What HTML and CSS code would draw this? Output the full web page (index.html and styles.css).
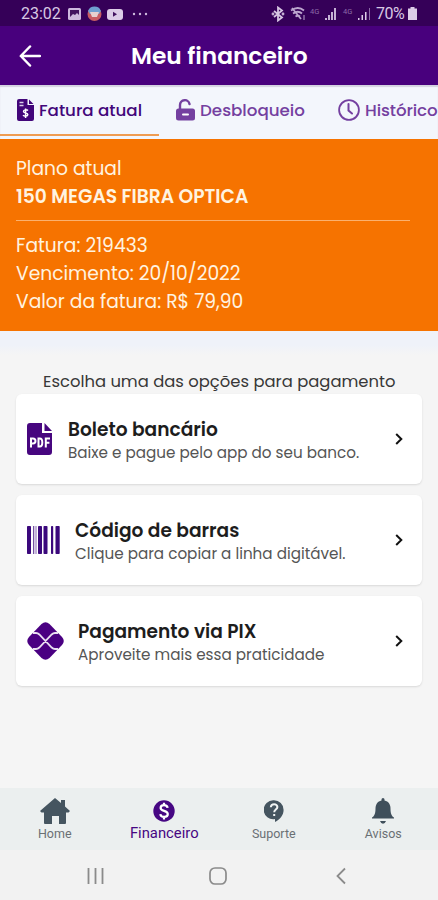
FILE: index.html
```html
<!DOCTYPE html>
<html lang="pt-BR">
<head>
<meta charset="utf-8">
<title>Meu financeiro</title>
<link rel="stylesheet" href="styles.css">
</head>
<body>
<div class="phone">
  <div class="status">
    <span class="clock">23:02</span>
    <svg class="st-left" width="86" height="16" viewBox="0 0 86 16">
      <rect x="1" y="2" width="13" height="12" rx="1.5" fill="#cdb9de"/>
      <path d="M3 4h9v5l-2-2-2 2-2-1-3 3z" fill="#41125f"/>
      <circle cx="27.500" cy="8" r="7" fill="#c85c62"/>
      <path d="M21 5a7 7 0 0 1 13 0l-2 3H23z" fill="#6f9fd0"/>
      <path d="M23 6h9l-2 5h-5z" fill="#e7d0ce"/>
      <rect x="40" y="3" width="16" height="11" rx="3" fill="#dccce8"/>
      <path d="M46 5.800v5l4-2.500z" fill="#41125f"/>
      <g fill="#cdb9de"><circle cx="67" cy="8" r="1.200"/><circle cx="73" cy="8" r="1.200"/><circle cx="79" cy="8" r="1.200"/></g>
    </svg>
    <svg class="st-right" width="102" height="16" viewBox="0 0 102 16">
      <g fill="none" stroke="#d6c5e2" stroke-width="1.800"><path d="M3 5l8 6.500-4 3v-13l4 3L3 11"/><circle cx="2" cy="8" r=".5"/><circle cx="12" cy="8" r=".5"/></g>
      <g fill="none" stroke="#bda6cf" stroke-width="1.800"><path d="M20 4.500q7-5 13 0M22 7.500q5-3.500 9 0M24.500 10.500q2.500-1.500 4.500 0M21 2l9 11"/><path d="M33 9v5" stroke-width="1"/></g>
      <text x="39" y="8" class="net">4G</text>
      <path d="M54 14v-2h2v2zM57 14v-5h2v5zM60 14V6h2v8zM63 14V2h2v12z" fill="#c5b0d5"/>
      <text x="72" y="8" class="net">4G</text>
      <path d="M87 14v-2h1.500v2zM90.500 14V9h1.500v5zM94 14V6h1.500v8z" fill="#dccce8"/><path d="M98 14V2h1v12z" fill="#8d6ba8"/>
    </svg>
    <span class="battery">70%</span>
    <svg class="bat" width="9" height="13" viewBox="0 0 9 13"><path d="M2.500 0h4v1.500H9V13H0V1.500h2.500z" fill="#dccce8"/></svg>
  </div>

  <header class="header">
    <svg class="back" width="22" height="22" viewBox="0 0 22 22"><path d="M11 1.500 1.800 11l9.200 9.500M2 11h19" fill="none" stroke="#fff" stroke-width="2.500" stroke-linecap="round" stroke-linejoin="round"/></svg>
    <h1>Meu financeiro</h1>
  </header>

  <nav class="tabs">
    <div class="tab tab-active">
      <svg width="17" height="22" viewBox="0 0 17 22"><path d="M2 0h8.500v6H17v14a2 2 0 0 1-2 2H2a2 2 0 0 1-2-2V2a2 2 0 0 1 2-2zM12 .5 16.500 5H12z" fill="#42067a"/><path d="M2.500 3.500h4M2.500 6.500h4" stroke="#d9cfe8" stroke-width="1.300"/><path d="M11 11.500c-1-1-4.500-1-4.500 1s4.300 1 4.300 3-3.500 2-4.800.8M8.600 9.500v9.500" fill="none" stroke="#fff" stroke-width="1.500"/></svg>
      <span>Fatura atual</span>
    </div>
    <div class="tab tab-unlock">
      <svg width="19" height="22" viewBox="0 0 19 22"><path d="M4 11V6a4.800 4.800 0 0 1 9.500-1" fill="none" stroke="#7440a0" stroke-width="2.400" stroke-linecap="round"/><rect y="9.500" width="19" height="12" rx="2.500" fill="#7440a0"/><path d="M7 15.500h5" stroke="#fff" stroke-width="2" stroke-linecap="round"/></svg>
      <span>Desbloqueio</span>
    </div>
    <div class="tab tab-history">
      <svg width="22" height="22" viewBox="0 0 22 22"><g fill="none" stroke="#7440a0" stroke-linecap="round"><circle cx="11" cy="11" r="9.900" stroke-width="1.800"/><path d="M10.500 5v6.500l3.500 3" stroke-width="2"/></g></svg>
      <span>Histórico</span>
    </div>
  </nav>

  <section class="plan">
    <p>Plano atual</p>
    <p class="plan-name">150 MEGAS FIBRA OPTICA</p>
    <hr>
    <p>Fatura: 219433</p>
    <p>Vencimento: 20/10/2022</p>
    <p>Valor da fatura: R$ 79,90</p>
  </section>

  <main class="content">
    <p class="choose">Escolha uma das opções para pagamento</p>
    <div class="cards">
      <a class="card">
        <svg class="ic-pdf" width="25" height="32" viewBox="0 0 25 32"><path d="M3 0h12v10h10v19a3 3 0 0 1-3 3H3a3 3 0 0 1-3-3V3a3 3 0 0 1 3-3zM17.500 0 25 8h-7.500z" fill="#47067f"/><g fill="none" stroke="#fff" stroke-width="2"><path d="M4 24.500v-9h2a2.400 2.400 0 0 1 0 5H4M11.500 15.500v8h1.300q2.500 0 2.500-4t-2.500-4zM18.800 24.500v-9h4.200M18.800 19.800h3.600"/></g></svg>
        <div class="txt"><h2>Boleto bancário</h2><p>Baixe e pague pelo app do seu banco.</p></div>
        <svg class="chev" width="8" height="12" viewBox="0 0 8 12"><path d="M1.200 1 6.300 6l-5.100 5" fill="none" stroke="#111" stroke-width="2"/></svg>
      </a>
      <a class="card">
        <svg class="ic-bar" width="33" height="28" viewBox="0 0 33 28"><g fill="#3b087c"><rect width="4" height="28" rx=".8"/><rect x="6" width="1.300" height="28" opacity=".7"/><rect x="8.500" width="1" height="28" opacity=".6"/><rect x="11" width="4" height="28" rx=".8"/><rect x="16.500" width="4" height="28" rx=".8"/><rect x="24" width="2.200" height="28" rx=".8"/><rect x="28.500" width="4.200" height="28" rx=".8"/></g></svg>
        <div class="txt"><h2>Código de barras</h2><p>Clique para copiar a linha digitável.</p></div>
        <svg class="chev" width="8" height="12" viewBox="0 0 8 12"><path d="M1.200 1 6.300 6l-5.100 5" fill="none" stroke="#111" stroke-width="2"/></svg>
      </a>
      <a class="card">
        <svg class="ic-pix" width="37" height="38" viewBox="0 0 37 38"><path d="M14.500 2q4-3.500 8 0L35 15q3.500 4 0 8L22.500 36q-4 3.500-8 0L2 23q-3.500-4 0-8z" fill="#4a0082"/><path d="M6 11h3q1.800 0 3.300 1.500L24.700 25.500Q26.200 27 28 27h3M31 11h-3q-1.800 0-3.300 1.500L12.300 25.500Q10.800 27 9 27H6" fill="none" stroke="#e9dff1" stroke-width="1.800"/></svg>
        <div class="txt"><h2>Pagamento via PIX</h2><p>Aproveite mais essa praticidade</p></div>
        <svg class="chev" width="8" height="12" viewBox="0 0 8 12"><path d="M1.200 1 6.300 6l-5.100 5" fill="none" stroke="#111" stroke-width="2"/></svg>
      </a>
    </div>
  </main>

  <nav class="bottom">
    <div class="item">
      <svg width="30" height="26" viewBox="0 0 30 26"><path d="M15 0l6 5V2h4v6.500l5 4.500-1.500 1.500H26V25a1 1 0 0 1-1 1h-6v-8h-7v8H5a1 1 0 0 1-1-1V14.500H1.500L0 13z" fill="#455560"/></svg>
      <span>Home</span>
    </div>
    <div class="item on">
      <svg width="22" height="22" viewBox="0 0 22 22"><circle cx="11" cy="11" r="10.700" fill="#460783"/><path d="M14.600 7.800c-.5-3.600-7-3.500-7 .1 0 3.600 7.200 2.400 7.200 6.200 0 3.700-7 3.800-7.500 0M11 2.700V5M11 17v2.500" fill="none" stroke="#fff" stroke-width="2.200"/></svg>
      <span>Financeiro</span>
    </div>
    <div class="item">
      <svg width="20" height="22" viewBox="0 0 20 22"><path d="M10 .3a9.600 9.600 0 0 1 9.600 9.600c0 5-3.600 9.500-8.600 12.100v-2.900A9.500 9.500 0 1 1 10 .3z" fill="#455560"/><path d="M6.800 7.200c.3-4 6.600-3.800 6.600-.2 0 2.500-3.200 2.600-3.200 5.200M10.200 14v2" fill="none" stroke="#f0f4f4" stroke-width="2"/></svg>
      <span>Suporte</span>
    </div>
    <div class="item">
      <svg width="22" height="26" viewBox="0 0 22 26"><path d="M9.500 2.500V1.500a1.500 1.500 0 0 1 3 0v1c4 .8 6 4 6 8 0 5 1 7.500 3.500 9v1H0v-1c2.500-1.500 3.500-4 3.500-9 0-4 2-7.200 6-8zM8 23h6q-1 2.800-3 2.800T8 23z" fill="#3f4f5b"/></svg>
      <span>Avisos</span>
    </div>
  </nav>

  <div class="system">
    <svg width="17" height="18" viewBox="0 0 17 18"><path d="M1.500 1v16M8.500 1v16M15.500 1v16" stroke="#8b8b8b" stroke-width="1.800"/></svg>
    <svg class="sys-home" width="18" height="18" viewBox="0 0 18 18"><rect x="1" y="1" width="16" height="16" rx="5" fill="none" stroke="#8b8b8b" stroke-width="1.700"/></svg>
    <svg width="10" height="18" viewBox="0 0 10 18"><path d="M9 1.500 1.500 9 9 16.500" fill="none" stroke="#8b8b8b" stroke-width="1.800"/></svg>
  </div>
</div>
</body>
</html>
```

FILE: styles.css
```css
* { box-sizing: border-box; margin: 0; padding: 0; }
body { width: 438px; height: 900px; overflow: hidden; font-family: Poppins, Inter, sans-serif; background: #f5f5f5; }
svg { display: block; flex: none; }
.phone { width: 438px; height: 900px; display: flex; flex-direction: column; white-space: nowrap; overflow: hidden; }

.status { height: 26px; background: #350058; display: flex; align-items: center; padding: 1px 0 0 21px; color: #d8c8e4; font-family: Roboto, sans-serif; flex: none; }
.clock { font-size: 16px; width: 46px; }
.st-right { margin-left: 118px; }
.net { font: 7.500px Roboto, sans-serif; fill: #8d6ba8; }
.battery { font-size: 16px; width: 31px; margin-left: 3px; letter-spacing: -.5px; }
.bat { margin-left: 1px; }

.header { height: 59px; background: #48007d; display: flex; align-items: center; padding-left: 19px; color: #fff; flex: none; }
.header h1 { margin-left: 90px; font-size: 23.300px; font-weight: 600; }

.tabs { height: 54px; display: flex; background: #f3f6fc; box-shadow: inset 0 2px 1px #d3d2e0; flex: none; color: #7440a0; font-weight: 500; font-size: 16.700px; }
.tab { display: flex; align-items: center; flex: none; height: 51px; padding-bottom: 1px; }
.tab span { margin-left: 5px; }
.tab-active { width: 159px; padding: 0 0 0 17px; color: #42067a; border-bottom: 2px solid #ef9c52; }
.tab-unlock { padding-left: 17px; width: 179px; }
.tab-history span { font-size: 16.700px; letter-spacing: -.1px; }

.plan { height: 192px; background: #f67300; color: #fff3e0; padding: 16px 28px 0 16px; font-size: 18.700px; line-height: 28px; flex: none; }
.plan-name { font-weight: 600; }
.plan hr { border: 0; height: 1px; background: #fbb16e; margin: 9px 0 11px; }

.content { height: 457px; background: linear-gradient(#eff2f9 0, #eff2f9 14px, #f5f5f5 24px); padding: 39px 16px 0; flex: none; }
.choose { padding-left: 27px; height: 24px; line-height: 24px; font-size: 16.400px; color: #383838; }
.cards { display: grid; gap: 11px; grid-auto-rows: 90px; }
.card { background: #fff; border-radius: 6px; box-shadow: 0 1px 2px #d8d8d8; display: flex; align-items: center; padding: 0 19px 1px 11px; }
.ic-pdf { margin-right: 16px; }
.ic-bar { margin-right: 15px; }
.ic-pix { margin-right: 14px; }
.txt { flex: 1; padding-top: 3px; }
.card h2 { font-size: 18.600px; line-height: 24px; font-weight: 600; color: #1d1d1d; }
.card p { font-size: 15.200px; line-height: 21px; color: #555; }

.bottom { height: 62px; background: #ebefef; display: grid; grid-template-columns: repeat(4, 1fr); font: 12.500px Roboto, sans-serif; color: #6a7074; flex: none; }
.item { display: grid; grid-template-rows: 36px 19px; justify-items: center; align-items: end; }
.item:not(.on):nth-child(3) svg, .on svg { margin-bottom: 2px; }
.item span { line-height: 18px; }
.on { color: #460783; }
.on span { font-size: 14.800px; padding-bottom: 1px; }

.system { height: 50px; background: #f2f2f2; display: flex; align-items: center; padding: 2px 92px 0 87px; justify-content: space-between; flex: none; }
.sys-home { margin-right: 4px; }
```
